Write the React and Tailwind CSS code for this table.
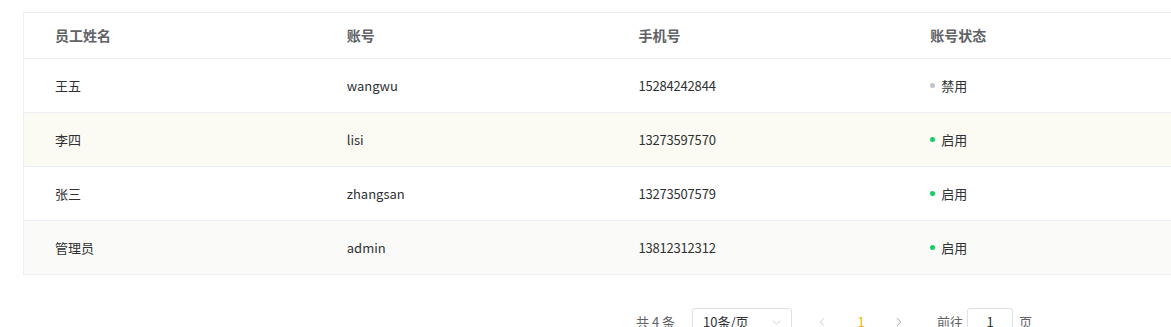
import React from 'react';
import { ChevronDown, ChevronLeft, ChevronRight } from 'lucide-react';

const rows = [
    { name: '王五', account: 'wangwu', phone: '15284242844', enabled: false, bg: 'bg-white' },
    { name: '李四', account: 'lisi', phone: '13273597570', enabled: true, bg: 'bg-[#fbfbf3]' },
    { name: '张三', account: 'zhangsan', phone: '13273507579', enabled: true, bg: 'bg-white' },
    { name: '管理员', account: 'admin', phone: '13812312312', enabled: true, bg: 'bg-[#fafaf8]' },
];

const font = "font-['Segoe_UI','Noto_Sans_CJK_SC',sans-serif]";

function App() {
    return (
        <div className={`w-[1171px] h-[327px] overflow-hidden bg-white ${font}`}>
            <div className="pt-3 pl-[23px]">
                <div className="w-[1168px] border-l border-t border-[#ebeef5]">
                    <div className="grid grid-cols-4 h-[46px] items-center border-b border-[#ebeef5] text-[14px] font-bold text-[#606266]">
                        <div className="pl-[31px]">员工姓名</div>
                        <div className="pl-[31px]">账号</div>
                        <div className="pl-[31px]">手机号</div>
                        <div className="pl-[31px]">账号状态</div>
                    </div>
                    {rows.map((r) => (
                        <div key={r.account} className={`grid grid-cols-4 h-[54px] items-center border-b border-[#ebeef5] text-[13px] text-[#303133] ${r.bg}`}>
                            <div className="pl-[31px]">{r.name}</div>
                            <div className="pl-[31px]">{r.account}</div>
                            <div className="pl-[31px] tracking-[-0.2px]">{r.phone}</div>
                            <div className="pl-[31px] flex items-center gap-[6px]">
                                <span className={`w-[5px] h-[5px] rounded-full ${r.enabled ? 'bg-[#13ce66]' : 'bg-[#c0c4cc]'}`}></span>
                                {r.enabled ? '启用' : '禁用'}
                            </div>
                        </div>
                    ))}
                </div>
            </div>
            <div className="mt-[33px] flex items-center h-7 pl-[636px] text-[13px] text-[#606266]">
                <span className="mr-[17px]">共 4 条</span>
                <div className="w-[100px] h-7 border border-[#dcdfe6] rounded-[3px] flex items-center justify-between pl-[10px] pr-[8px]">
                    <span className="text-[#303133]">10条/页</span>
                    <ChevronDown size={13} strokeWidth={1.5} className="text-[#c0c4cc]" />
                </div>
                <div className="ml-[15px] w-[30px] flex justify-center text-[#c0c4cc]">
                    <ChevronLeft size={14} strokeWidth={1.5} />
                </div>
                <div className="ml-[9px] w-[30px] text-center text-[#f7b500]">1</div>
                <div className="ml-[8px] w-[30px] flex justify-center text-[#909399]">
                    <ChevronRight size={14} strokeWidth={1.5} />
                </div>
                <span className="ml-[23px]">前往</span>
                <div className="ml-[4px] w-[46px] h-7 border border-[#dcdfe6] rounded-[3px] flex items-center justify-center text-[#303133]">1</div>
                <span className="ml-[6px]">页</span>
            </div>
        </div>
    );
}

export default App;
